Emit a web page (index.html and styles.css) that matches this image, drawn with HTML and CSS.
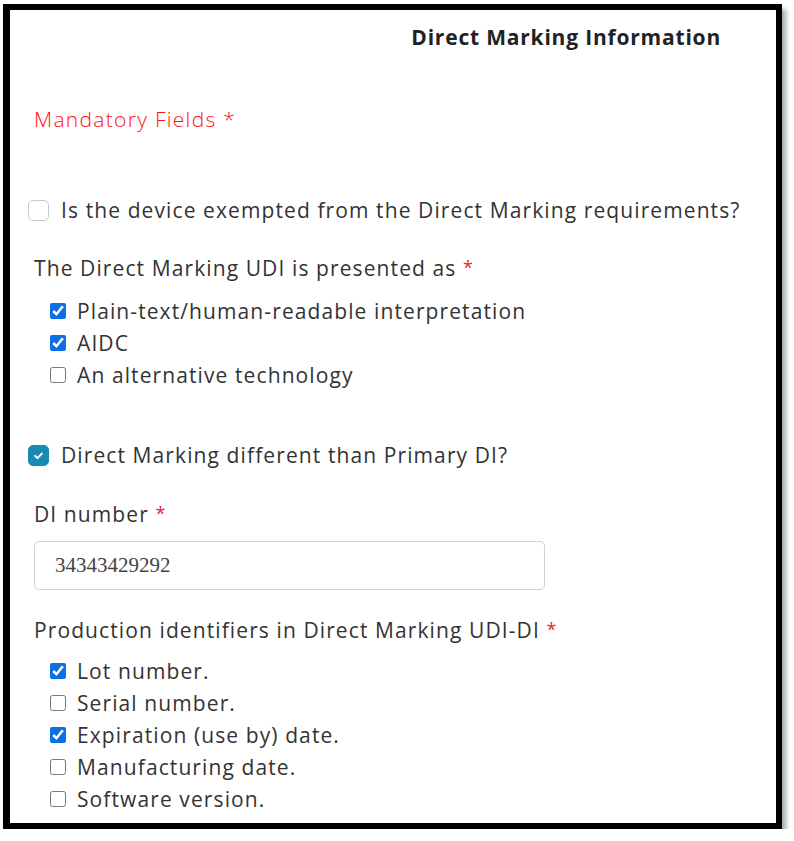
FILE: index.html
```html
<!DOCTYPE html>
<html>
<head>
<meta charset="utf-8">
<link rel="stylesheet" href="styles.css">
</head>
<body>
<div class="frame">
  <div class="head"><h1 class="title">Direct Marking Information</h1></div>
  <p class="mandatory">Mandatory Fields *</p>

  <label class="big-row exempt">
    <span class="big-box"></span>
    <span class="txt">Is the device exempted from the Direct Marking requirements?</span>
  </label>

  <p class="label presented">The Direct Marking UDI is presented as <span class="req">*</span></p>
  <div class="list">
    <label class="row"><input type="checkbox" checked><span>Plain-text/human-readable interpretation</span></label>
    <label class="row"><input type="checkbox" checked><span>AIDC</span></label>
    <label class="row"><input type="checkbox"><span>An alternative technology</span></label>
  </div>

  <label class="big-row diff">
    <span class="big-box checked"><svg viewBox="0 0 20 20" width="15" height="15"><path d="M5.5 10.5l3 3L14.5 7.5" fill="none" stroke="#fff" stroke-width="2.8" stroke-linecap="round" stroke-linejoin="round"/></svg></span>
    <span class="txt">Direct Marking different than Primary DI?</span>
  </label>

  <p class="label di">DI number <span class="req">*</span></p>
  <div class="input">34343429292</div>

  <p class="label prod">Production identifiers in Direct Marking UDI-DI <span class="req">*</span></p>
  <div class="list list2">
    <label class="row"><input type="checkbox" checked><span>Lot number.</span></label>
    <label class="row"><input type="checkbox"><span>Serial number.</span></label>
    <label class="row"><input type="checkbox" checked><span>Expiration (use by) date.</span></label>
    <label class="row"><input type="checkbox"><span>Manufacturing date.</span></label>
    <label class="row"><input type="checkbox"><span>Software version.</span></label>
  </div>
</div>
</body>
</html>
```

FILE: styles.css
```css
* { box-sizing: border-box; }
html, body { margin: 0; padding: 0; background: #fff; }
body {
  font-family: "Open Sans", "DejaVu Sans", sans-serif;
  color: #333;
  font-size: 21px;
  letter-spacing: 1.1px;
}
.frame {
  margin: 4px 0 0 3px;
  width: 779px;
  height: 825px;
  border: 6px solid #000;
  border-left-width: 7px;
  box-shadow: 4px 5px 5px rgba(0,0,0,0.35);
  padding: 11px 0 0 18px;
  overflow: hidden;
}
.head { display: flex; justify-content: flex-end; padding-right: 55px; }
.title {
  margin: 0;
  font-size: 21px;
  font-weight: 700;
  line-height: 32px;
  letter-spacing: 0.8px;
  color: #222;
}
.mandatory {
  margin: 50px 0 0 6px;
  line-height: 32px;
  color: #ff1010;
  font-weight: 300;
  font-size: 21px;
  letter-spacing: 1.3px;
}
.big-row {
  display: flex;
  align-items: center;
  gap: 12px;
  line-height: 32px;
}
.exempt { margin-top: 59px; }
.diff { margin-top: 48px; }
.big-box {
  width: 21px;
  height: 21px;
  border: 1px solid #c4c8cc;
  border-radius: 5px;
  background: #fff;
  display: flex;
  align-items: center;
  justify-content: center;
  flex: none;
}
.big-box.checked {
  background: #1a8ab3;
  border-color: #1a8ab3;
}
.label {
  margin: 0 0 0 6px;
  line-height: 32px;
}
.req {
  color: #e8262b;
  font-size: 18px;
  line-height: 0;
  vertical-align: 2px;
  letter-spacing: 0;
}
.presented { margin-top: 26px; }
.list { margin: 11px 0 0 22px; }
.list2 { margin-top: 9px; }
.row {
  display: flex;
  align-items: center;
  gap: 11px;
  height: 32px;
}
.row input {
  margin: 0;
  width: 16px;
  height: 16px;
  accent-color: #0b6fe8;
  flex: none;
}
.di { margin-top: 27px; }
.input {
  margin: 11px 0 0 6px;
  width: 511px;
  height: 49px;
  border: 1px solid #d0d4d8;
  border-radius: 5px;
  padding: 0 0 0 20px;
  display: flex;
  align-items: center;
  font-family: "Liberation Serif", serif;
  font-size: 21px;
  letter-spacing: 0;
  color: #444;
}
.prod { margin-top: 24px; }
```
